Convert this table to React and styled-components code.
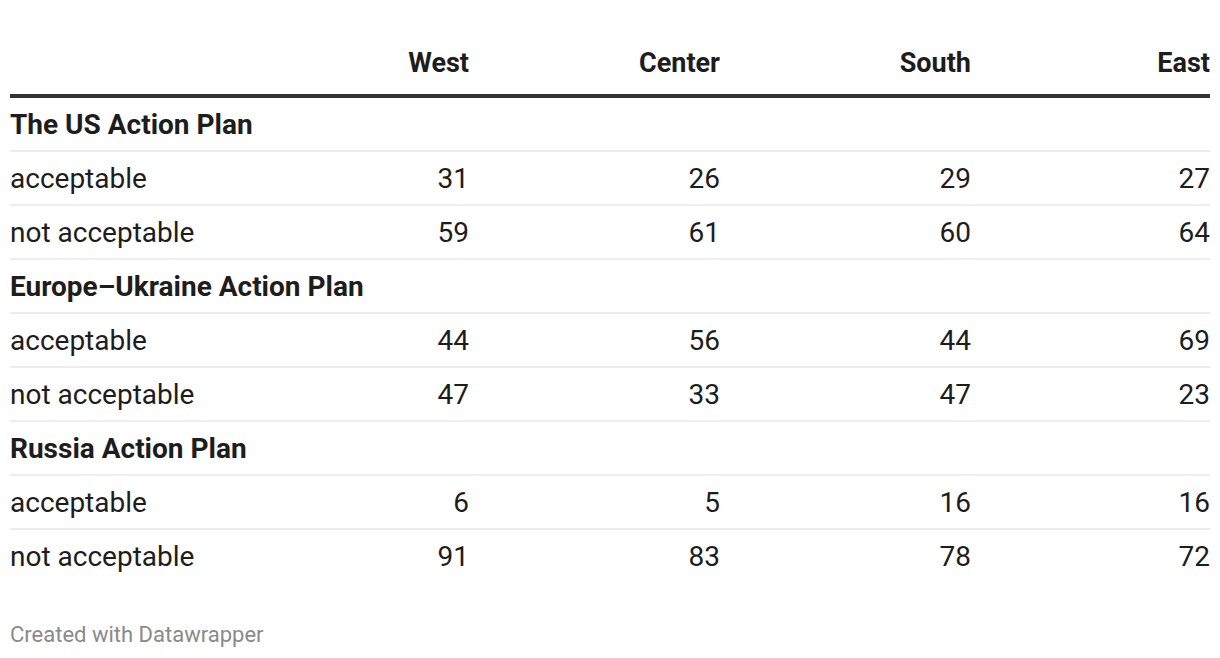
import React from "react";
import styled, { createGlobalStyle } from "styled-components";

const GlobalStyle = createGlobalStyle`
  html, body {
    margin: 0;
    padding: 0;
    background: #ffffff;
  }
  body {
    font-family: Roboto, "Noto Sans", "Liberation Sans", sans-serif;
    color: #1d1d1d;
  }
`;

const Page = styled.div`
  width: 1220px;
  height: 658px;
  box-sizing: border-box;
  padding: 46px 10px 0 10px;
`;

const Table = styled.div`
  display: grid;
  grid-template-columns: 208px 251px 251px 251px 239px;
`;

const Row = styled.div`
  display: contents;
`;

const Cell = styled.div`
  box-sizing: border-box;
  display: flex;
  align-items: ${({ $head }) => ($head ? "flex-end" : "center")};
  justify-content: ${({ $num }) => ($num ? "flex-end" : "flex-start")};
  height: ${({ $head }) => ($head ? "52px" : "54px")};
  padding-bottom: ${({ $head }) => ($head ? "14px" : "0")};
  font-size: ${({ $head }) => ($head ? "27px" : "28px")};
  line-height: 33px;
  font-weight: ${({ $bold }) => ($bold ? 700 : 400)};
  white-space: nowrap;
  border-bottom: ${({ $head, $last }) =>
    $head ? "4px solid #333333" : $last ? "2px solid transparent" : "2px solid #ededed"};
`;

const GroupCell = styled(Cell)`
  grid-column: 1 / -1;
`;

const Footer = styled.div`
  margin-top: 38px;
  font-size: 22px;
  line-height: 26px;
  color: #8a8a8a;
`;

const regions = ["West", "Center", "South", "East"];

const groups = [
  {
    title: "The US Action Plan",
    rows: [
      ["acceptable", [31, 26, 29, 27]],
      ["not acceptable", [59, 61, 60, 64]],
    ],
  },
  {
    title: "Europe\u2013Ukraine Action Plan",
    rows: [
      ["acceptable", [44, 56, 44, 69]],
      ["not acceptable", [47, 33, 47, 23]],
    ],
  },
  {
    title: "Russia Action Plan",
    rows: [
      ["acceptable", [6, 5, 16, 16]],
      ["not acceptable", [91, 83, 78, 72]],
    ],
  },
];

const App = () => {
  return (
    <>
      <GlobalStyle />
      <Page>
        <Table>
          <Row>
            <Cell $head />
            {regions.map((r) => (
              <Cell key={r} $head $num $bold>
                {r}
              </Cell>
            ))}
          </Row>
          {groups.map((g, gi) => (
            <React.Fragment key={g.title}>
              <Row>
                <GroupCell $bold>{g.title}</GroupCell>
              </Row>
              {g.rows.map(([label, vals], ri) => {
                const last = gi === groups.length - 1 && ri === g.rows.length - 1;
                return (
                  <Row key={label}>
                    <Cell $last={last}>{label}</Cell>
                    {vals.map((v, i) => (
                      <Cell key={i} $num $last={last}>
                        {v}
                      </Cell>
                    ))}
                  </Row>
                );
              })}
            </React.Fragment>
          ))}
        </Table>
        <Footer>Created with Datawrapper</Footer>
      </Page>
    </>
  );
};

export default App;
